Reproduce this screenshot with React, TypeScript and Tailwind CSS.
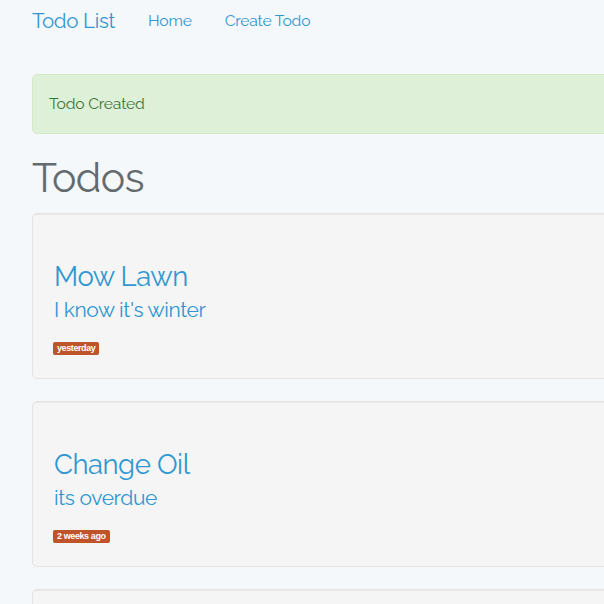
import React from "react";

const font = { fontFamily: "Raleway, Lato, 'Open Sans', sans-serif" };

function Well({ title, body, when }: { title: string; body: string; when: string }) {
  return (
    <div className="mb-[22px] h-[166px] rounded-[5px] border border-[#e3e3e3] bg-[#f5f5f5] px-[21px] pt-[45px] shadow-[inset_0_1px_1px_rgba(0,0,0,0.05)]">
      <h3 className="text-[27.5px] leading-[34px] font-normal tracking-[-0.45px] text-[#3097d1]">{title}</h3>
      <h4 className="mt-[2px] text-[21px] leading-[30px] font-normal tracking-[-0.4px] text-[#3097d1]">{body}</h4>
      <span
        className="-ml-[1px] mt-[17px] inline-block rounded-[2px] bg-[#bf5329] px-[4px] text-[9px] leading-[13px] font-bold tracking-[-0.4px] text-white"
        style={{ fontFamily: "'Liberation Sans', Arial, sans-serif" }}
      >
        {when}
      </span>
    </div>
  );
}

export default function App() {
  return (
    <div className="min-h-screen w-full overflow-hidden bg-[#f5f8fa]" style={font}>
      <div className="w-[1100px] pl-[32px]">
        <nav className="flex h-[42px] items-center">
          <a className="text-[20.5px] leading-none tracking-[-0.3px] text-[#3097d1]">Todo List</a>
          <a className="ml-[33px] text-[15.7px] leading-none tracking-[-0.2px] text-[#3097d1]">Home</a>
          <a className="ml-[33px] text-[15.7px] leading-none tracking-[-0.2px] text-[#3097d1]">Create Todo</a>
        </nav>
        <div className="mt-[32px] flex h-[60px] items-center rounded-[5px] border border-[#d6e9c6] bg-[#dff0d8] pl-[16px] text-[15.7px] tracking-[-0.2px] text-[#3c763d]">
          Todo Created
        </div>
        <h1 className="mt-[20px] mb-[12px] text-[41px] leading-[47px] font-normal tracking-[-0.5px] text-[#636b6f]">Todos</h1>
        <Well title="Mow Lawn" body="I know it's winter" when="yesterday" />
        <Well title="Change Oil" body="its overdue" when="2 weeks ago" />
        <Well title="Buy Groceries" body="milk and eggs" when="3 weeks ago" />
      </div>
    </div>
  );
}
